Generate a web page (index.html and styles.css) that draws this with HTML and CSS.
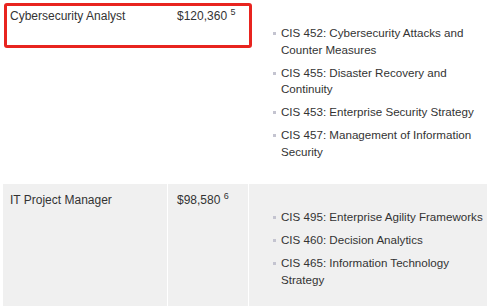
FILE: index.html
```
<!DOCTYPE html>
<html>
<head>
<meta charset="utf-8">
<link rel="stylesheet" href="styles.css">
</head>
<body>
<div class="wrap">
<table class="careers">
  <tr class="row">
    <td class="c-title">Cybersecurity Analyst</td>
    <td class="c-salary">$120,360 <sup class="ref">5</sup></td>
    <td class="c-courses">
      <ul class="courses">
        <li>CIS 452: Cybersecurity Attacks and Counter Measures</li>
        <li>CIS 455: Disaster Recovery and Continuity</li>
        <li>CIS 453: Enterprise Security Strategy</li>
        <li>CIS 457: Management of Information Security</li>
      </ul>
    </td>
  </tr>
  <tr class="row alt">
    <td class="c-title">IT Project Manager</td>
    <td class="c-salary">$98,580 <sup class="ref">6</sup></td>
    <td class="c-courses">
      <ul class="courses">
        <li>CIS 495: Enterprise Agility Frameworks</li>
        <li>CIS 460: Decision Analytics</li>
        <li>CIS 465: Information Technology Strategy</li>
      </ul>
    </td>
  </tr>
</table>
<div class="highlight"></div>
</div>
</body>
</html>
```
FILE: styles.css
```
html, body {
  margin: 0;
  padding: 0;
  background: #ffffff;
  overflow: hidden;
}
body {
  font-family: "Liberation Sans", Arial, sans-serif;
  font-size: 12px;
  line-height: 16.5px;
  color: #333333;
}
.wrap {
  position: relative;
  width: 487px;
}
.careers {
  border-collapse: separate;
  border-spacing: 1px;
  margin: -1px 0 0 2px;
  table-layout: fixed;
  width: 487px;
}
.careers td {
  box-sizing: border-box;
  vertical-align: top;
  padding: 8px 3px 8px 7px;
}
.c-title { width: 164px; }
.c-salary { width: 80px; padding-left: 9px !important; }
.c-courses { width: 239px; }
.alt td { background: #f0f0f0; }
.ref {
  font-size: 9px;
  line-height: 0;
  vertical-align: 5px;
}
.courses {
  list-style: none;
  margin: 17px 0 15px 0;
  padding: 0 0 0 25px;
  font-size: 11.6px;
}
.courses li {
  position: relative;
  margin-bottom: 6.5px;
}
.courses li:last-child { margin-bottom: 0; }
.courses li::before {
  content: "";
  position: absolute;
  left: -8px;
  top: 7px;
  width: 3px;
  height: 3px;
  background: #c4c4d0;
}
.highlight {
  position: absolute;
  left: 4px;
  top: 4px;
  width: 242px;
  height: 39px;
  border: 3px solid #e8241f;
  border-radius: 3px;
}
```
